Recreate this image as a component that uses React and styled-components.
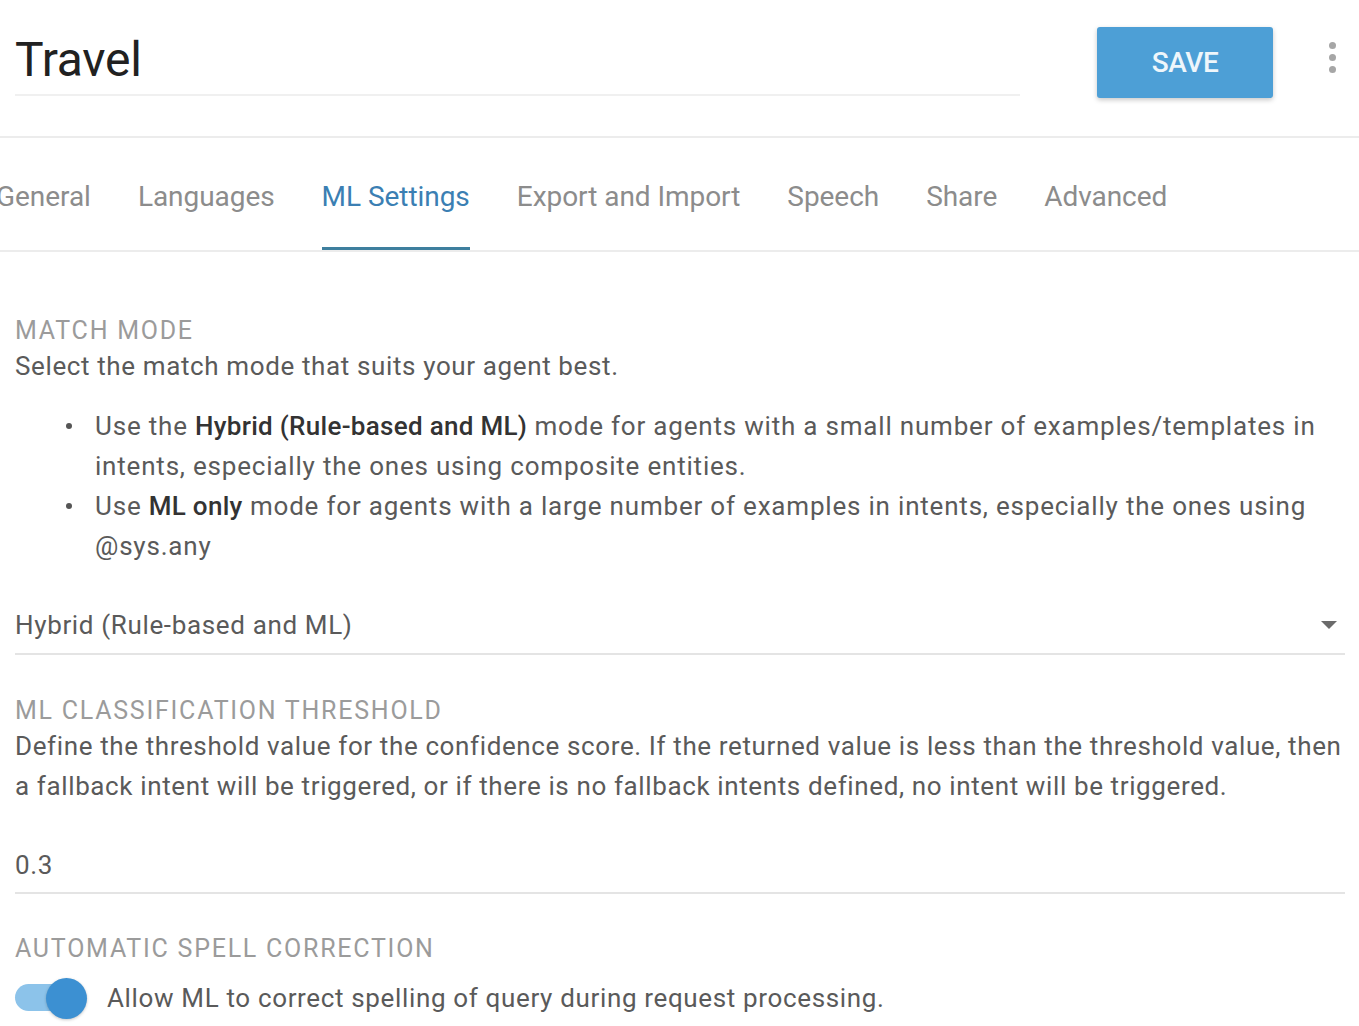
import React from "react";
import styled, { createGlobalStyle } from "styled-components";

const Global = createGlobalStyle`
  html, body { margin: 0; padding: 0; background: #fff; overflow: hidden; }
  body { font-family: Roboto, "Noto Sans", Arial, sans-serif; color: #555; }
  * { box-sizing: border-box; }
`;

const Page = styled.div`
  width: 1359px;
  height: 1026px;
  overflow: hidden;
  background: #fff;
`;

const Header = styled.header`
  display: flex;
  align-items: flex-start;
  height: 138px;
  border-bottom: 2px solid #ececec;
`;

const TitleField = styled.div`
  width: 1005px;
  height: 96px;
  margin-left: 15px;
  border-bottom: 2px solid #f0f0f0;
  display: flex;
  align-items: flex-end;
`;

const Title = styled.h1`
  margin: 0 0 10px 0;
  font-size: 48px;
  font-weight: 400;
  color: #212121;
  line-height: 1;
  letter-spacing: -0.2px;
`;

const SaveButton = styled.button`
  margin: 27px 0 0 77px;
  width: 176px;
  height: 71px;
  border: none;
  border-radius: 3px;
  background: #4d9fd6;
  color: #eef6fb;
  font-family: Roboto, Arial, sans-serif;
  font-size: 28px;
  font-weight: 500;
  letter-spacing: -0.4px;
  box-shadow: 0 2px 5px rgba(0, 0, 0, 0.22);
`;

const Kebab = styled.div`
  margin: 42px 0 0 56px;
  display: flex;
  flex-direction: column;
  gap: 5px;
  span {
    width: 7px;
    height: 7px;
    border-radius: 50%;
    background: #a6a6a6;
  }
`;

const TabBar = styled.nav`
  height: 114px;
  border-bottom: 2px solid #ececec;
  overflow: hidden;
`;

const TabList = styled.div`
  display: flex;
  gap: 47px;
  height: 100%;
  margin-left: -4px;
`;

const Tab = styled.div`
  display: flex;
  align-items: center;
  height: 100%;
  padding-top: 7px;
  font-size: 28px;
  letter-spacing: -0.05px;
  color: ${(p) => (p.$active ? "#3b7fb3" : "#8c8c8c")};
  border-bottom: 3px solid ${(p) => (p.$active ? "#3e7f9e" : "transparent")};
  white-space: nowrap;
`;

const Content = styled.main`
  padding: 64px 14px 0 15px;
`;

const Label = styled.div`
  font-size: 25px;
  line-height: 30px;
  color: #9b9b9b;
  text-transform: uppercase;
  letter-spacing: 1.75px;
`;

const Desc = styled.p`
  margin: 0;
  font-size: 26px;
  line-height: 40px;
  color: #5a5a5a;
  letter-spacing: 0.62px;
`;

const Bullets = styled.ul`
  margin: 20px 0 0 0;
  padding-left: 80px;
  list-style: none;
  font-size: 26px;
  line-height: 40px;
  color: #5a5a5a;
  letter-spacing: 0.8px;
  b { font-weight: 500; color: #333; letter-spacing: 0.3px; }
`;

const Bullet = styled.li`
  position: relative;
  &::before {
    content: "";
    position: absolute;
    left: -29px;
    top: 17px;
    width: 6px;
    height: 6px;
    border-radius: 50%;
    background: #555;
  }
`;

const Field = styled.div`
  display: flex;
  align-items: center;
  justify-content: space-between;
  height: ${(p) => p.$h}px;
  margin-top: ${(p) => p.$mt || 0}px;
  padding-top: ${(p) => p.$pt || 0}px;
  border-bottom: 2px solid #e4e4e4;
  font-size: 26px;
  color: #5a5a5a;
  letter-spacing: 0.65px;
`;

const Caret = styled.span`
  width: 0;
  height: 0;
  margin-right: 8px;
  border-left: 8px solid transparent;
  border-right: 8px solid transparent;
  border-top: 8px solid #6b6b6b;
`;

const Section = styled.section`
  margin-top: ${(p) => p.$mt || 0}px;
`;

const ToggleRow = styled.div`
  display: flex;
  align-items: center;
  gap: 20px;
  margin-top: 13px;
  font-size: 26px;
  color: #5a5a5a;
  letter-spacing: 0.65px;
`;

const Toggle = styled.div`
  position: relative;
  width: 72px;
  height: 42px;
  flex: none;
`;

const Track = styled.div`
  position: absolute;
  left: 0;
  top: 7px;
  width: 56px;
  height: 27px;
  border-radius: 14px;
  background: #8cc3ea;
`;

const Thumb = styled.div`
  position: absolute;
  right: 0;
  top: 1px;
  width: 41px;
  height: 41px;
  border-radius: 50%;
  background: #3c90d2;
  box-shadow: 0 1px 3px rgba(0, 0, 0, 0.22);
`;

export default function App() {
  const tabs = ["General", "Languages", "ML Settings", "Export and Import", "Speech", "Share", "Advanced"];
  return (
    <Page>
      <Global />
      <Header>
        <TitleField>
          <Title>Travel</Title>
        </TitleField>
        <SaveButton>SAVE</SaveButton>
        <Kebab>
          <span />
          <span />
          <span />
        </Kebab>
      </Header>
      <TabBar>
        <TabList>
          {tabs.map((t) => (
            <Tab key={t} $active={t === "ML Settings"}>
              {t}
            </Tab>
          ))}
        </TabList>
      </TabBar>
      <Content>
        <Label>Match mode</Label>
        <Desc>Select the match mode that suits your agent best.</Desc>
        <Bullets>
          <Bullet>
            Use the <b>Hybrid (Rule-based and ML)</b> mode for agents with a small number of examples/templates in
            intents, especially the ones using composite entities.
          </Bullet>
          <Bullet>
            Use <b>ML only</b> mode for agents with a large number of examples in intents, especially the ones using
            @sys.any
          </Bullet>
        </Bullets>
        <Field $h={58} $mt={31}>
          <span>Hybrid (Rule-based and ML)</span>
          <Caret />
        </Field>
        <Section $mt={41}>
          <Label>ML classification threshold</Label>
          <Desc>
            Define the threshold value for the confidence score. If the returned value is less than the threshold value, then
            a fallback intent will be triggered, or if there is no fallback intents defined, no intent will be triggered.
          </Desc>
          <Field $h={88} $pt={32}>
            <span>0.3</span>
          </Field>
        </Section>
        <Section $mt={40}>
          <Label>Automatic spell correction</Label>
          <ToggleRow>
            <Toggle>
              <Track />
              <Thumb />
            </Toggle>
            <span>Allow ML to correct spelling of query during request processing.</span>
          </ToggleRow>
        </Section>
      </Content>
    </Page>
  );
}
